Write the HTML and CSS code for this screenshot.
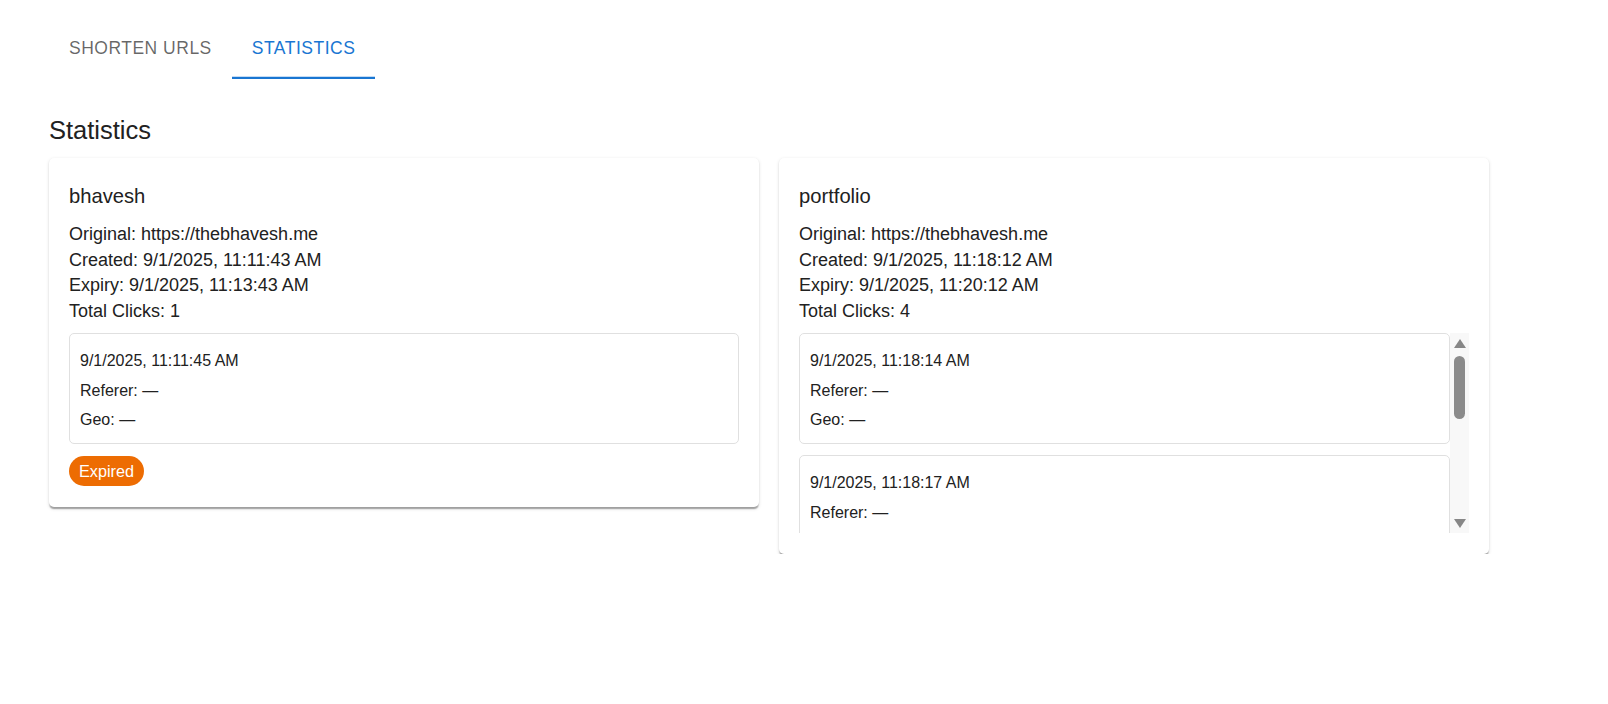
FILE: index.html
```html
<!DOCTYPE html>
<html lang="en">
<head>
<meta charset="utf-8">
<title>Statistics</title>
<link rel="stylesheet" href="styles.css">
</head>
<body>
<div class="page">
  <nav class="tabs">
    <div class="tab">Shorten URLs</div>
    <div class="tab tab-active">Statistics</div>
  </nav>
  <h2 class="heading">Statistics</h2>
  <div class="cards">
    <article class="card">
      <div class="card-title">bhavesh</div>
      <div class="info">Original: https://thebhavesh.me</div>
      <div class="info">Created: 9/1/2025, 11:11:43 AM</div>
      <div class="info">Expiry: 9/1/2025, 11:13:43 AM</div>
      <div class="info">Total Clicks: 1</div>
      <div class="clicks">
        <div class="click">
          <div class="click-line">9/1/2025, 11:11:45 AM</div>
          <div class="click-line">Referer: —</div>
          <div class="click-line">Geo: —</div>
        </div>
      </div>
      <div class="chip-row"><span class="chip">Expired</span></div>
    </article>
    <article class="card">
      <div class="card-title">portfolio</div>
      <div class="info">Original: https://thebhavesh.me</div>
      <div class="info">Created: 9/1/2025, 11:18:12 AM</div>
      <div class="info">Expiry: 9/1/2025, 11:20:12 AM</div>
      <div class="info">Total Clicks: 4</div>
      <div class="clicks-scroll">
        <div class="clicks-list">
          <div class="click">
            <div class="click-line">9/1/2025, 11:18:14 AM</div>
            <div class="click-line">Referer: —</div>
            <div class="click-line">Geo: —</div>
          </div>
          <div class="click">
            <div class="click-line">9/1/2025, 11:18:17 AM</div>
            <div class="click-line">Referer: —</div>
            <div class="click-line">Geo: —</div>
          </div>
        </div>
        <div class="scrollbar">
          <div class="sb-up"></div>
          <div class="sb-thumb"></div>
          <div class="sb-down"></div>
        </div>
      </div>
    </article>
  </div>
</div>
</body>
</html>
```

FILE: styles.css
```css
* {
  box-sizing: border-box;
}

body {
  margin: 0;
  font-family: "Liberation Sans", Arial, Helvetica, sans-serif;
  color: #212121;
  background: #ffffff;
}

.page {
  padding: 19px 0 0 49px;
}

.tabs {
  display: flex;
  height: 60px;
}

.tab {
  padding: 18px 20px 0;
  font-size: 17.5px;
  line-height: 22px;
  letter-spacing: 0.5px;
  text-transform: uppercase;
  color: rgba(0, 0, 0, 0.6);
}

.tab-active {
  color: #1976d2;
  box-shadow: inset 0 -2.3px 0 #1976d2;
}

.heading {
  margin: 31px 0 8px;
  font-size: 25.5px;
  line-height: 40px;
  font-weight: 400;
}

.cards {
  display: grid;
  grid-template-columns: 710px 710px;
  gap: 20px;
  align-items: start;
}

.card {
  background: #ffffff;
  border-radius: 5px;
  padding: 20px 20px 21px;
  box-shadow: 0 2.5px 1.25px -1.25px rgba(0, 0, 0, 0.2),
    0 1.25px 1.25px 0 rgba(0, 0, 0, 0.14),
    0 1.25px 3.75px 0 rgba(0, 0, 0, 0.12);
}

.card-title {
  padding-top: 2px;
  font-size: 20.2px;
  line-height: 32px;
  margin-bottom: 10px;
}

.info {
  font-size: 18px;
  line-height: 25.7px;
}

.clicks {
  margin-top: 8.2px;
}

.click {
  border: 1px solid #e0e0e0;
  border-radius: 5px;
  padding: 11.8px 10px 8.1px;
  font-size: 16px;
  line-height: 29.7px;
}

.click + .click {
  margin-top: 11.4px;
}

.chip-row {
  display: flex;
  margin-top: 12.4px;
}

.chip {
  display: inline-flex;
  align-items: center;
  height: 30px;
  padding: 0 10px;
  border-radius: 15px;
  background: #ed6c02;
  color: #ffffff;
  font-size: 16.25px;
}

.clicks-scroll {
  display: flex;
  height: 200px;
  margin-top: 8.2px;
}

.clicks-list {
  flex: 1;
  overflow: hidden;
}

.scrollbar {
  width: 19px;
  background: #f8f8f8;
  display: flex;
  flex-direction: column;
  align-items: center;
  padding: 6px 0 5px;
}

.sb-up {
  width: 0;
  height: 0;
  border-left: 6px solid transparent;
  border-right: 6px solid transparent;
  border-bottom: 9px solid #878787;
}

.sb-thumb {
  width: 11px;
  height: 63px;
  margin-top: 7.7px;
  border-radius: 5.5px;
  background: #8b8b8b;
}

.sb-down {
  margin-top: auto;
  width: 0;
  height: 0;
  border-left: 6px solid transparent;
  border-right: 6px solid transparent;
  border-top: 9px solid #878787;
}
```
